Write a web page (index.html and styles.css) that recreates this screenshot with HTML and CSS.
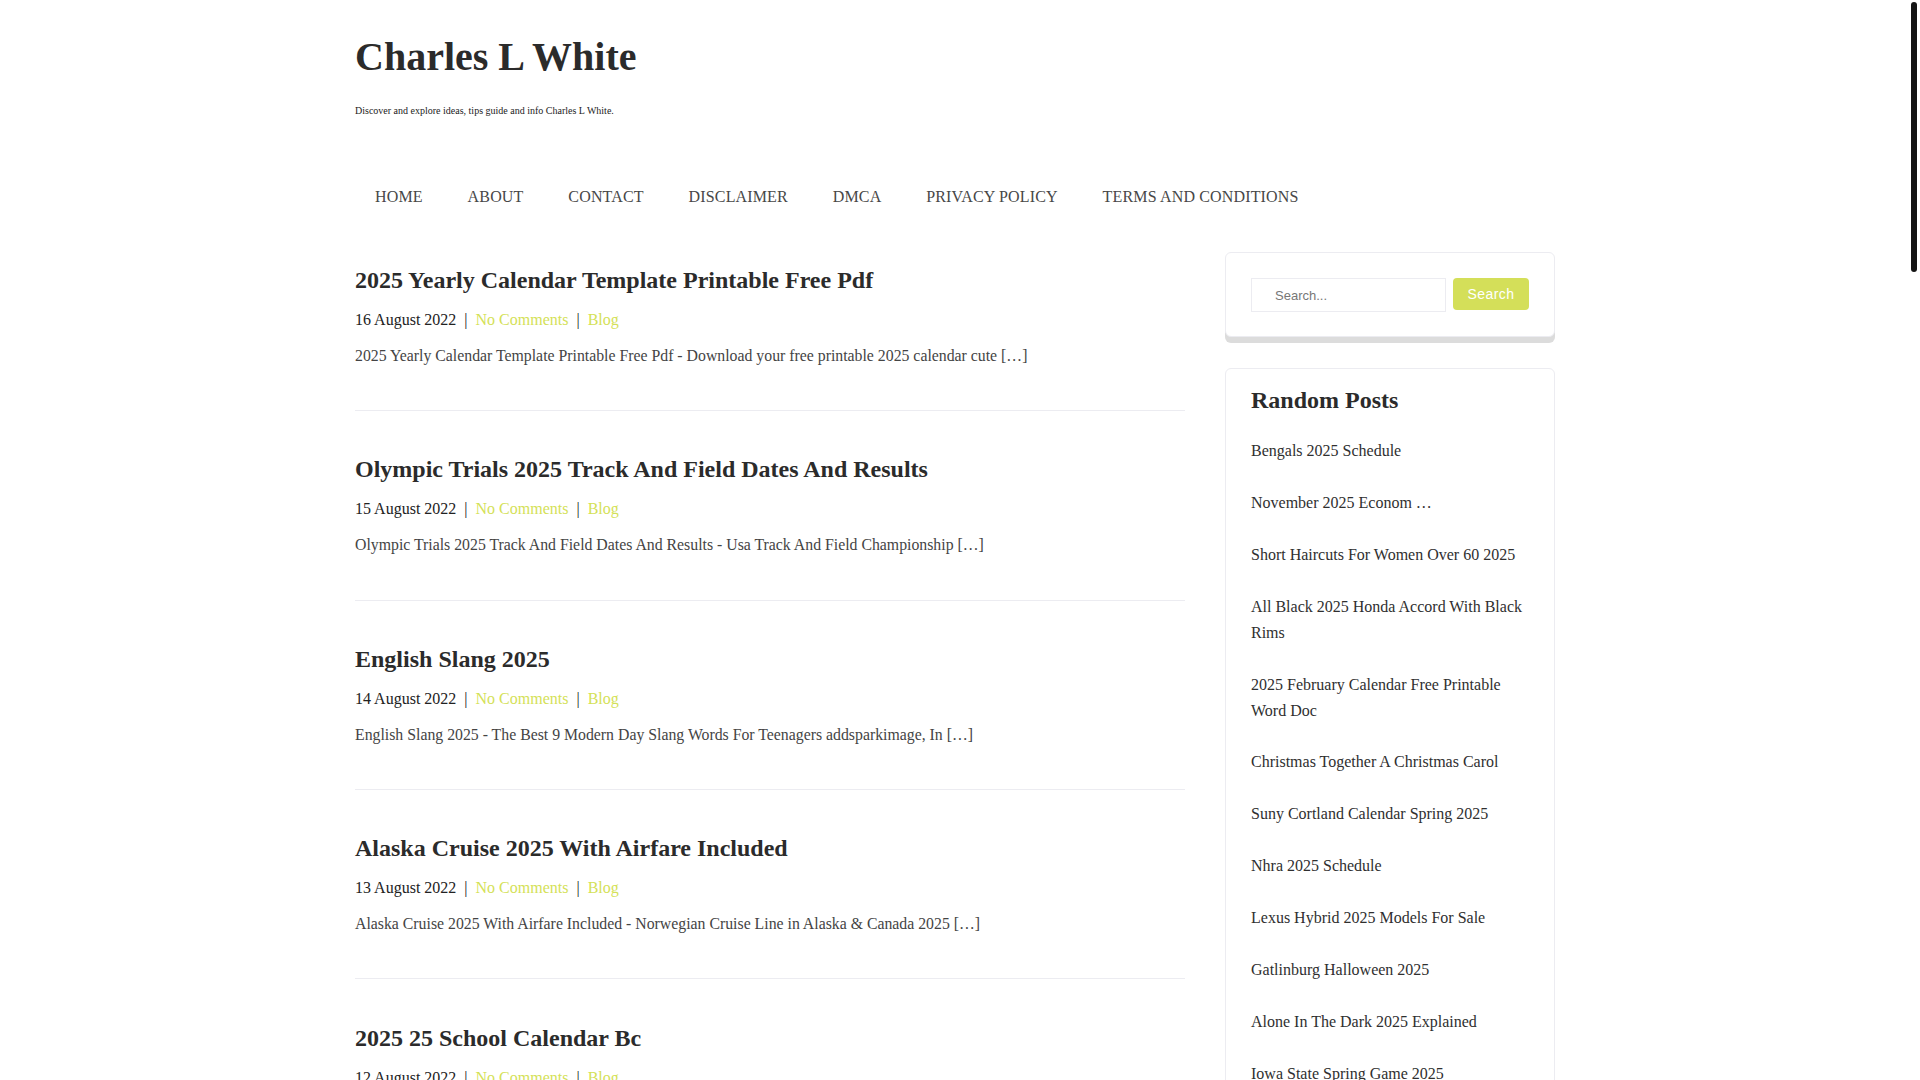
FILE: index.html
```html
<!DOCTYPE html>
<html lang="en">
<head>
<meta charset="utf-8">
<title>Charles L White</title>
<link rel="stylesheet" href="styles.css">
</head>
<body>
<div class="scroll-thumb" aria-hidden="true"></div>
<div class="container">
  <header class="site-header">
    <h1 class="site-title"><a href="#">Charles L White</a></h1>
    <p class="site-desc">Discover and explore ideas, tips guide and info Charles L White.</p>
    <nav class="main-nav">
      <ul class="nav-list">
        <li><a href="#">HOME</a></li>
        <li><a href="#">ABOUT</a></li>
        <li><a href="#">CONTACT</a></li>
        <li><a href="#">DISCLAIMER</a></li>
        <li><a href="#">DMCA</a></li>
        <li><a href="#">PRIVACY POLICY</a></li>
        <li><a href="#">TERMS AND CONDITIONS</a></li>
      </ul>
    </nav>
  </header>

  <div class="content-row">
    <main class="main-col">
      <article class="post">
        <h2 class="post-title"><a href="#">2025 Yearly Calendar Template Printable Free Pdf</a></h2>
        <div class="post-meta">16 August 2022<span class="sep">|</span><a href="#">No Comments</a><span class="sep">|</span><a href="#">Blog</a></div>
        <p class="post-excerpt">2025 Yearly Calendar Template Printable Free Pdf - Download your free printable 2025 calendar cute […]</p>
      </article>
      <article class="post">
        <h2 class="post-title"><a href="#">Olympic Trials 2025 Track And Field Dates And Results</a></h2>
        <div class="post-meta">15 August 2022<span class="sep">|</span><a href="#">No Comments</a><span class="sep">|</span><a href="#">Blog</a></div>
        <p class="post-excerpt">Olympic Trials 2025 Track And Field Dates And Results - Usa Track And Field Championship […]</p>
      </article>
      <article class="post">
        <h2 class="post-title"><a href="#">English Slang 2025</a></h2>
        <div class="post-meta">14 August 2022<span class="sep">|</span><a href="#">No Comments</a><span class="sep">|</span><a href="#">Blog</a></div>
        <p class="post-excerpt">English Slang 2025 - The Best 9 Modern Day Slang Words For Teenagers addsparkimage, In […]</p>
      </article>
      <article class="post">
        <h2 class="post-title"><a href="#">Alaska Cruise 2025 With Airfare Included</a></h2>
        <div class="post-meta">13 August 2022<span class="sep">|</span><a href="#">No Comments</a><span class="sep">|</span><a href="#">Blog</a></div>
        <p class="post-excerpt">Alaska Cruise 2025 With Airfare Included - Norwegian Cruise Line in Alaska &amp; Canada 2025 […]</p>
      </article>
      <article class="post">
        <h2 class="post-title"><a href="#">2025 25 School Calendar Bc</a></h2>
        <div class="post-meta">12 August 2022<span class="sep">|</span><a href="#">No Comments</a><span class="sep">|</span><a href="#">Blog</a></div>
        <p class="post-excerpt">2025 25 School Calendar Bc - BC School Calendar 2025 2025 with holidays and breaks […]</p>
      </article>
      <article class="post">
        <h2 class="post-title"><a href="#">Bengals 2025 Schedule</a></h2>
        <div class="post-meta">11 August 2022<span class="sep">|</span><a href="#">No Comments</a><span class="sep">|</span><a href="#">Blog</a></div>
        <p class="post-excerpt">Bengals 2025 Schedule - Cincinnati Bengals 2025 schedule, dates and opponents […]</p>
      </article>
      <article class="post">
        <h2 class="post-title"><a href="#">Nhra 2025 Schedule</a></h2>
        <div class="post-meta">10 August 2022<span class="sep">|</span><a href="#">No Comments</a><span class="sep">|</span><a href="#">Blog</a></div>
        <p class="post-excerpt">Nhra 2025 Schedule - NHRA Mission Foods Drag Racing Series 2025 schedule […]</p>
      </article>
      <article class="post">
        <h2 class="post-title"><a href="#">Gatlinburg Halloween 2025</a></h2>
        <div class="post-meta">9 August 2022<span class="sep">|</span><a href="#">No Comments</a><span class="sep">|</span><a href="#">Blog</a></div>
        <p class="post-excerpt">Gatlinburg Halloween 2025 - Fall events and things to do in Gatlinburg […]</p>
      </article>
      <article class="post">
        <h2 class="post-title"><a href="#">Lexus Hybrid 2025 Models For Sale</a></h2>
        <div class="post-meta">8 August 2022<span class="sep">|</span><a href="#">No Comments</a><span class="sep">|</span><a href="#">Blog</a></div>
        <p class="post-excerpt">Lexus Hybrid 2025 Models For Sale - New Lexus hybrid lineup and prices […]</p>
      </article>
      <article class="post">
        <h2 class="post-title"><a href="#">Suny Cortland Calendar Spring 2025</a></h2>
        <div class="post-meta">7 August 2022<span class="sep">|</span><a href="#">No Comments</a><span class="sep">|</span><a href="#">Blog</a></div>
        <p class="post-excerpt">Suny Cortland Calendar Spring 2025 - Academic calendar and important dates […]</p>
      </article>
      <article class="post">
        <h2 class="post-title"><a href="#">Christmas Together A Christmas Carol</a></h2>
        <div class="post-meta">6 August 2022<span class="sep">|</span><a href="#">No Comments</a><span class="sep">|</span><a href="#">Blog</a></div>
        <p class="post-excerpt">Christmas Together A Christmas Carol - Lyrics and history of the song […]</p>
      </article>
      <article class="post">
        <h2 class="post-title"><a href="#">Alone In The Dark 2025 Explained</a></h2>
        <div class="post-meta">5 August 2022<span class="sep">|</span><a href="#">No Comments</a><span class="sep">|</span><a href="#">Blog</a></div>
        <p class="post-excerpt">Alone In The Dark 2025 Explained - Story, ending and characters explained […]</p>
      </article>
      <article class="post">
        <h2 class="post-title"><a href="#">Iowa State Spring Game 2025</a></h2>
        <div class="post-meta">4 August 2022<span class="sep">|</span><a href="#">No Comments</a><span class="sep">|</span><a href="#">Blog</a></div>
        <p class="post-excerpt">Iowa State Spring Game 2025 - Date, time and how to watch the Cyclones […]</p>
      </article>
      <article class="post">
        <h2 class="post-title"><a href="#">Short Haircuts For Women Over 60 2025</a></h2>
        <div class="post-meta">3 August 2022<span class="sep">|</span><a href="#">No Comments</a><span class="sep">|</span><a href="#">Blog</a></div>
        <p class="post-excerpt">Short Haircuts For Women Over 60 2025 - Easy and stylish short hairstyles […]</p>
      </article>
      <article class="post">
        <h2 class="post-title"><a href="#">All Black 2025 Honda Accord With Black Rims</a></h2>
        <div class="post-meta">2 August 2022<span class="sep">|</span><a href="#">No Comments</a><span class="sep">|</span><a href="#">Blog</a></div>
        <p class="post-excerpt">All Black 2025 Honda Accord With Black Rims - Photos and specifications […]</p>
      </article>
      <article class="post">
        <h2 class="post-title"><a href="#">2025 February Calendar Free Printable Word Doc</a></h2>
        <div class="post-meta">1 August 2022<span class="sep">|</span><a href="#">No Comments</a><span class="sep">|</span><a href="#">Blog</a></div>
        <p class="post-excerpt">2025 February Calendar Free Printable Word Doc - Editable monthly calendar template […]</p>
      </article>
      <article class="post">
        <h2 class="post-title"><a href="#">November 2025 Economic Calendar</a></h2>
        <div class="post-meta">31 July 2022<span class="sep">|</span><a href="#">No Comments</a><span class="sep">|</span><a href="#">Blog</a></div>
        <p class="post-excerpt">November 2025 Economic Calendar - Key economic events and releases […]</p>
      </article>
      <article class="post">
        <h2 class="post-title"><a href="#">2025 Calendar With Holidays Printable</a></h2>
        <div class="post-meta">30 July 2022<span class="sep">|</span><a href="#">No Comments</a><span class="sep">|</span><a href="#">Blog</a></div>
        <p class="post-excerpt">2025 Calendar With Holidays Printable - Free yearly calendar with US holidays […]</p>
      </article>
      <article class="post">
        <h2 class="post-title"><a href="#">Super Bowl 2025 Halftime Show</a></h2>
        <div class="post-meta">29 July 2022<span class="sep">|</span><a href="#">No Comments</a><span class="sep">|</span><a href="#">Blog</a></div>
        <p class="post-excerpt">Super Bowl 2025 Halftime Show - Performers, date and location […]</p>
      </article>
      <article class="post">
        <h2 class="post-title"><a href="#">Easter 2025 Date Uk</a></h2>
        <div class="post-meta">28 July 2022<span class="sep">|</span><a href="#">No Comments</a><span class="sep">|</span><a href="#">Blog</a></div>
        <p class="post-excerpt">Easter 2025 Date Uk - When is Easter Sunday and the bank holidays […]</p>
      </article>
      <div class="pagination"><a href="#" class="page-next">Next Page »</a></div>
    </main>

    <aside class="sidebar">
      <section class="widget widget-search">
        <form class="search-form">
          <input class="search-field" type="search" placeholder="Search...">
          <button class="search-submit" type="button">Search</button>
        </form>
      </section>
      <section class="widget widget-posts">
        <h3 class="widget-title">Random Posts</h3>
        <ul class="widget-list">
          <li><a href="#">Bengals 2025 Schedule</a></li>
          <li><a href="#">November 2025 Econom …</a></li>
          <li><a href="#">Short Haircuts For Women Over 60 2025</a></li>
          <li><a href="#">All Black 2025 Honda Accord With Black Rims</a></li>
          <li><a href="#">2025 February Calendar Free Printable Word Doc</a></li>
          <li><a href="#">Christmas Together A Christmas Carol</a></li>
          <li><a href="#">Suny Cortland Calendar Spring 2025</a></li>
          <li><a href="#">Nhra 2025 Schedule</a></li>
          <li><a href="#">Lexus Hybrid 2025 Models For Sale</a></li>
          <li><a href="#">Gatlinburg Halloween 2025</a></li>
          <li><a href="#">Alone In The Dark 2025 Explained</a></li>
          <li><a href="#">Iowa State Spring Game 2025</a></li>
          <li><a href="#">Easter 2025 Date Uk</a></li>
          <li><a href="#">Super Bowl 2025 Halftime Show</a></li>
          <li><a href="#">2025 Calendar With Holidays Printable</a></li>
        </ul>
      </section>
    </aside>
  </div>
</div>
<footer class="site-footer">
  <p class="footer-text">Copyright © 2025 Charles L White. All rights reserved.</p>
</footer>
</body>
</html>
```

FILE: styles.css
```css
body {
  margin: 0;
  padding-right: 10px;
  font-family: "Liberation Serif", "Times New Roman", serif;
  font-size: 16px;
  color: #333;
  background: #fff;
}

/* scrollbar thumb indicator drawn over the page's right gutter */
.scroll-thumb {
  position: fixed;
  top: 2px;
  right: 3px;
  width: 6px;
  height: 270px;
  border-radius: 3px;
  background: #141414;
  z-index: 10;
}

a { text-decoration: none; color: inherit; }

.container {
  width: 1200px;
  margin: 0 auto;
}

.site-header {
  padding-top: 33.2px;
}

.site-title {
  margin: 0;
  font-size: 40px;
  line-height: 48px;
  font-weight: bold;
  color: #2b2b2b;
}

.site-desc {
  margin: 22.2px 0 0;
  font-size: 10px;
  line-height: 15px;
  color: #222;
}

.main-nav {
  margin-top: 66.5px;
}

.nav-list {
  list-style: none;
  margin: 0;
  padding: 0 0 0 20px;
  display: flex;
  gap: 44.9px;
}

.nav-list a {
  display: block;
  font-size: 16px;
  line-height: 24px;
  letter-spacing: 0.15px;
  color: #474747;
}

.content-row {
  display: flex;
  gap: 40px;
  margin-top: 12.9px;
  align-items: flex-start;
}

.main-col {
  width: 830px;
  flex: none;
}

.post {
  padding: 44.3px 0 42.4px;
  border-bottom: 1px solid #ececf1;
}

.post-title {
  margin: 0;
  font-size: 24px;
  line-height: 29px;
  font-weight: bold;
  color: #2b2b2b;
}

.post-meta {
  margin-top: 13px;
  font-size: 16px;
  line-height: 24px;
  color: #222;
}

.post-meta a { color: #d4e157; }

.sep {
  margin: 0 8px;
  color: #222;
}

.post-excerpt {
  margin: 11.7px 0 0;
  font-size: 15.8px;
  line-height: 24px;
  color: #444;
}

.pagination {
  padding: 40px 0 30px;
  font-size: 16px;
}

.page-next { color: #d4e157; }

.sidebar {
  width: 330px;
  flex: none;
  padding-top: 30.5px;
}

.widget {
  background: #fff;
  border: 1px solid #ececf1;
  border-radius: 6px;
  padding: 25px;
}

.widget-search {
  padding-bottom: 24px;
  box-shadow: 0 6px 0 0 #dcdcdc;
  margin-bottom: 31px;
}

.search-form {
  display: flex;
  gap: 7px;
  align-items: flex-start;
}

.search-field {
  box-sizing: border-box;
  width: 195px;
  height: 34px;
  margin: 0;
  border: 1px solid #ececf1;
  border-radius: 0;
  padding: 0 0 0 23px;
  font-family: "Liberation Sans", Arial, sans-serif;
  font-size: 13px;
  color: #555;
  background: #fff;
  outline: none;
}

.search-field::placeholder { color: #777; }

.search-submit {
  box-sizing: border-box;
  width: 76px;
  height: 32px;
  margin: 0;
  border: none;
  border-radius: 4px;
  background: #d4df59;
  color: #fff;
  font-family: "Liberation Sans", Arial, sans-serif;
  font-size: 14px;
  letter-spacing: 0.4px;
  padding: 0;
}

.widget-posts {
  padding-top: 16.5px;
}

.widget-title {
  margin: 0 0 10.7px;
  font-size: 24px;
  line-height: 28.8px;
  font-weight: bold;
  color: #2b2b2b;
}

.widget-list {
  list-style: none;
  margin: 0;
  padding: 0;
}

.widget-list li {
  padding: 13.2px 0;
  font-size: 16px;
  line-height: 25.6px;
  color: #2f2f2f;
}

.site-footer {
  margin-top: 60px;
  padding: 40px 0 40px;
  border-top: 1px solid #ececf1;
  text-align: center;
}

.footer-text {
  margin: 0;
  font-size: 14px;
  color: #666;
}
```
